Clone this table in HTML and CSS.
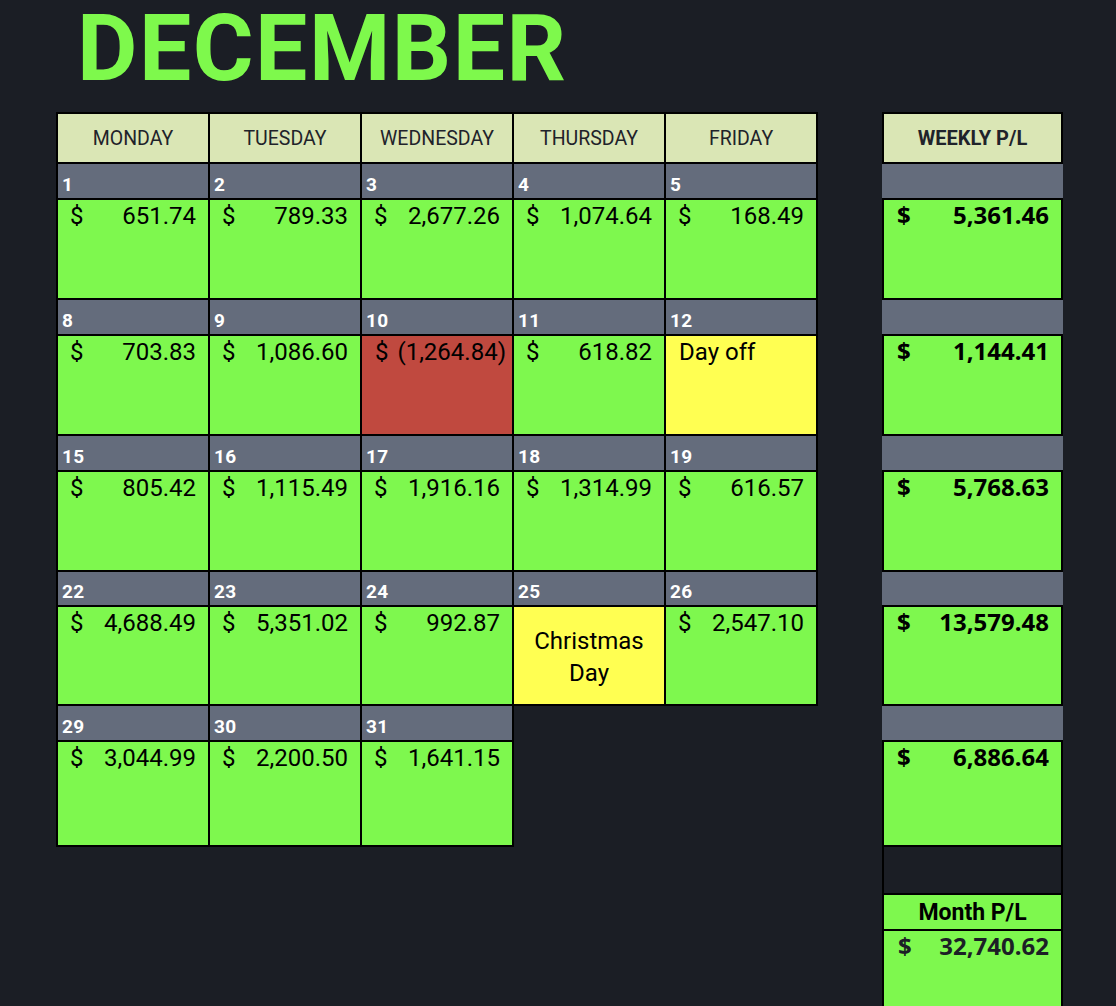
FILE: index.html
```html
<!DOCTYPE html>
<html lang="en">
<head>
<meta charset="utf-8">
<title>December P/L</title>
<link rel="stylesheet" href="styles.css">
</head>
<body>
<div class="page">
  <h1 class="title">DECEMBER</h1>
  <div class="cal">
    <div class="hd first">MONDAY</div>
    <div class="hd">TUESDAY</div>
    <div class="hd">WEDNESDAY</div>
    <div class="hd">THURSDAY</div>
    <div class="hd">FRIDAY</div>
    <div class="wk-hd">WEEKLY P/L</div>

    <div class="date first">1</div>
    <div class="date">2</div>
    <div class="date">3</div>
    <div class="date">4</div>
    <div class="date">5</div>
    <div class="wk-date"></div>
    <div class="val first"><span>$</span><span>651.74</span></div>
    <div class="val"><span>$</span><span>789.33</span></div>
    <div class="val"><span>$</span><span>2,677.26</span></div>
    <div class="val"><span>$</span><span>1,074.64</span></div>
    <div class="val"><span>$</span><span>168.49</span></div>
    <div class="wk-val"><span>$</span><span>5,361.46</span></div>

    <div class="date first">8</div>
    <div class="date">9</div>
    <div class="date">10</div>
    <div class="date">11</div>
    <div class="date">12</div>
    <div class="wk-date"></div>
    <div class="val first"><span>$</span><span>703.83</span></div>
    <div class="val"><span>$</span><span>1,086.60</span></div>
    <div class="val loss"><span>$</span><span class="neg">(1,264.84)</span></div>
    <div class="val"><span>$</span><span>618.82</span></div>
    <div class="val off"><span>Day off</span></div>
    <div class="wk-val"><span>$</span><span>1,144.41</span></div>

    <div class="date first">15</div>
    <div class="date">16</div>
    <div class="date">17</div>
    <div class="date">18</div>
    <div class="date">19</div>
    <div class="wk-date"></div>
    <div class="val first"><span>$</span><span>805.42</span></div>
    <div class="val"><span>$</span><span>1,115.49</span></div>
    <div class="val"><span>$</span><span>1,916.16</span></div>
    <div class="val"><span>$</span><span>1,314.99</span></div>
    <div class="val"><span>$</span><span>616.57</span></div>
    <div class="wk-val"><span>$</span><span>5,768.63</span></div>

    <div class="date first">22</div>
    <div class="date">23</div>
    <div class="date">24</div>
    <div class="date">25</div>
    <div class="date">26</div>
    <div class="wk-date"></div>
    <div class="val first"><span>$</span><span>4,688.49</span></div>
    <div class="val"><span>$</span><span>5,351.02</span></div>
    <div class="val"><span>$</span><span>992.87</span></div>
    <div class="holiday">Christmas<br>Day</div>
    <div class="val"><span>$</span><span>2,547.10</span></div>
    <div class="wk-val"><span>$</span><span>13,579.48</span></div>

    <div class="date first">29</div>
    <div class="date">30</div>
    <div class="date">31</div>
    <div class="wk-date"></div>
    <div class="val first"><span>$</span><span>3,044.99</span></div>
    <div class="val"><span>$</span><span>2,200.50</span></div>
    <div class="val"><span>$</span><span>1,641.15</span></div>
    <div class="wk-val"><span>$</span><span>6,886.64</span></div>

    <div class="wk-gap"></div>
    <div class="month-hd">Month P/L</div>
    <div class="month-val"><span>$</span><span>32,740.62</span></div>
  </div>
</div>
</body>
</html>
```

FILE: styles.css
```css
html, body {
  margin: 0;
  padding: 0;
  background: #1b1e25;
  overflow: hidden;
}

.page {
  width: 1116px;
  height: 1006px;
  overflow: hidden;
}

.title {
  margin: -6px 0 0 77px;
  font-family: Roboto, "Liberation Sans", sans-serif;
  font-weight: 700;
  font-size: 93px;
  line-height: 109px;
  letter-spacing: 1.5px;
  color: #7ef94c;
}

.cal {
  margin: 9px 0 0 56px;
  display: grid;
  grid-template-columns: 154px 152px 152px 152px 152px 64px 181px;
  grid-template-rows: 52px 36px 100px 36px 100px 36px 100px 35px 99px 36px 105px 48px 36px 100px;
  font-family: Roboto, "Liberation Sans", sans-serif;
}

.cal > div {
  box-sizing: border-box;
}

/* day headers */
.hd {
  display: flex;
  align-items: center;
  justify-content: center;
  background: #dae6b5;
  border-top: 2px solid #000;
  border-right: 2px solid #000;
  border-bottom: 2px solid #000;
  font-size: 19.5px;
  font-weight: 400;
  color: #1f232a;
}

.first {
  border-left: 2px solid #000;
}

/* date strip */
.date {
  display: flex;
  align-items: flex-end;
  padding: 0 0 3px 4px;
  background: #646c7c;
  border-right: 2px solid #000;
  border-bottom: 2px solid #000;
  font-size: 19px;
  font-weight: 700;
  line-height: 20px;
  letter-spacing: 0.3px;
  color: #ffffff;
}

/* day values */
.val {
  display: flex;
  justify-content: space-between;
  align-items: flex-start;
  padding: 2px 12px 0 12px;
  background: #7ef84e;
  border-right: 2px solid #000;
  border-bottom: 2px solid #000;
  font-size: 24px;
  line-height: 28px;
  color: #000;
}

.val.loss {
  background: #c0493f;
  padding-left: 13px;
}

.neg {
  margin-right: -6px;
}

.val.off {
  background: #ffff52;
  padding-left: 13px;
}

.holiday {
  display: flex;
  align-items: center;
  justify-content: center;
  text-align: center;
  padding-top: 2px;
  background: #ffff52;
  border-right: 2px solid #000;
  border-bottom: 2px solid #000;
  font-size: 24px;
  line-height: 32px;
  color: #000;
}

/* weekly column */
.wk-hd {
  grid-column: 7;
  display: flex;
  align-items: center;
  justify-content: center;
  background: #dae6b5;
  border: 2px solid #000;
  font-size: 20px;
  font-weight: 700;
  color: #1f232a;
}

.wk-date {
  grid-column: 7;
  background: #646c7c;
  border-bottom: 2px solid #000;
}

.wk-val,
.month-val {
  grid-column: 7;
  display: flex;
  justify-content: space-between;
  align-items: flex-start;
  padding: 1px 12px 0 13px;
  background: #7ef84e;
  border-left: 2px solid #000;
  border-right: 2px solid #000;
  border-bottom: 2px solid #000;
  font-family: "Noto Sans", Roboto, sans-serif;
  font-size: 24px;
  font-weight: 700;
  line-height: 28px;
  color: #000;
}

.month-val {
  padding-top: 1px;
  padding-left: 14px;
  color: #1c2026;
  border-bottom: none;
}

.wk-gap {
  grid-column: 7;
  background: #1b1e25;
  border-left: 2px solid #000;
  border-right: 2px solid #000;
  border-bottom: 2px solid #000;
}

.month-hd {
  grid-column: 7;
  display: flex;
  align-items: center;
  justify-content: center;
  background: #7ef84e;
  border-left: 2px solid #000;
  border-right: 2px solid #000;
  border-bottom: 2px solid #000;
  font-size: 23px;
  font-weight: 700;
  color: #000;
}
```
